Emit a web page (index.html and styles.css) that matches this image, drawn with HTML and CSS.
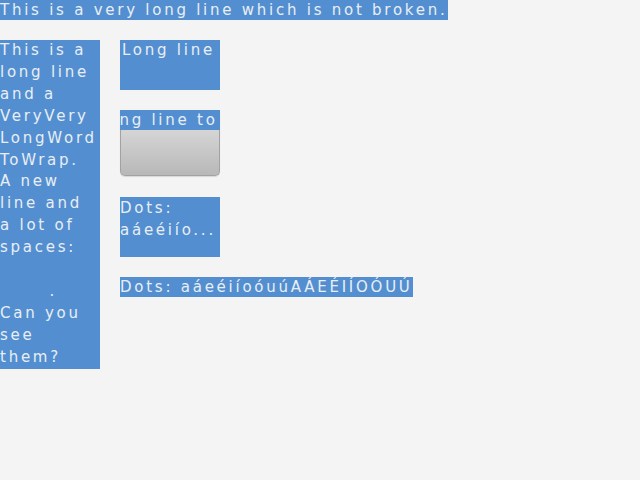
FILE: index.html
```html
<!DOCTYPE html>
<html>
<head>
<meta charset="utf-8">
<link rel="stylesheet" href="styles.css">
</head>
<body>
<div class="top">This is a very long line which is not broken.</div>
<div class="main">
  <p class="col">This is a<br>long line<br>and a<br>VeryVery<br>LongWord<br>ToWrap.<br>A new<br>line and<br>a lot of<br>spaces:<br><br><span class="dot">.</span><br>Can you<br>see<br>them?</p>
  <div class="side">
    <div class="box clip">Long line</div>
    <div class="btn">
      <div class="strip"><span class="scroll">Long line to wrap</span></div>
    </div>
    <div class="box dots">Dots:<br>aáeéiío...</div>
    <div class="wide">Dots: aáeéiíoóuúAÁEÉIÍOÓUÚ</div>
  </div>
</div>
</body>
</html>
```

FILE: styles.css
```css
html, body {
  margin: 0;
  padding: 0;
  background: #f4f4f4;
  width: 640px;
  height: 480px;
  overflow: hidden;
}
body {
  font-family: "DejaVu Sans", sans-serif;
  font-size: 15px;
  letter-spacing: 2.75px;
  color: #e9eef5;
}
.top {
  display: inline-block;
  background: #538fd0;
  height: 20px;
  line-height: 21px;
  white-space: nowrap;
  vertical-align: top;
}
.main {
  display: flex;
  gap: 20px;
  margin-top: 20px;
  align-items: flex-start;
}
.col {
  margin: 0;
  width: 100px;
  background: #538fd0;
  line-height: 21.9px;
  white-space: nowrap;
  overflow: hidden;
}
.dot {
  display: inline-block;
  padding-left: 49.5px;
}
.side {
  display: flex;
  flex-direction: column;
  align-items: flex-start;
}
.box {
  width: 100px;
  background: #538fd0;
  line-height: 22px;
  overflow: hidden;
}
.clip {
  height: 50px;
  line-height: 21px;
  padding-left: 2px;
  width: 98px;
  white-space: nowrap;
}
.btn {
  margin-top: 20px;
  width: 100px;
  height: 66px;
  box-sizing: border-box;
  border: 1px solid #a2a2a2;
  border-top: none;
  border-radius: 0 0 5px 5px;
  background: linear-gradient(#e2e2e2, #b8b8b8);
  box-shadow: 0 1px 1px rgba(0,0,0,0.12);
}
.strip {
  margin: 0 -1px;
  height: 20px;
  line-height: 21px;
  background: #538fd0;
  overflow: hidden;
  white-space: nowrap;
}
.scroll {
  display: inline-block;
  margin-left: -23.4px;
}
.dots {
  margin-top: 21px;
  height: 60px;
}
.wide {
  margin-top: 20px;
  background: #538fd0;
  height: 20px;
  line-height: 21px;
  white-space: nowrap;
}
```
